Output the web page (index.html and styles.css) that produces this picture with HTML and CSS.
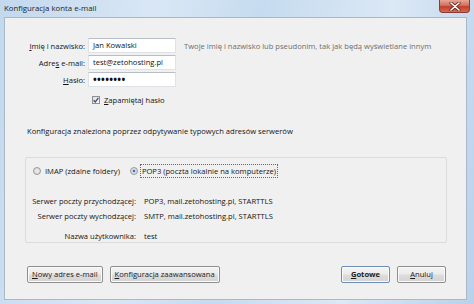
FILE: index.html
```html
<!DOCTYPE html>
<html lang="pl">
<head>
    <meta charset="UTF-8">
    <title>Konfiguracja konta e-mail</title>
    <link rel="stylesheet" href="styles.css">
</head>
<body>
<div class="window">
    <div class="titlebar">
        <span class="title">Konfiguracja konta e-mail</span>
        <div class="close">
            <svg width="12" height="9" viewBox="0 0 12 9">
                <path d="M2 1 L10 8 M10 1 L2 8" stroke="#6b2a22" stroke-width="3.2" stroke-linecap="round"/>
                <path d="M2 1 L10 8 M10 1 L2 8" stroke="#ffffff" stroke-width="1.6" stroke-linecap="round"/>
            </svg>
        </div>
    </div>
    <div class="client">
        <div class="identity">
            <label class="label"><u>I</u>mię i nazwisko:</label>
            <div class="field">Jan Kowalski</div>
            <span class="hint">Twoje imię i nazwisko lub pseudonim, tak jak będą wyświetlane innym</span>

            <label class="label">Adre<u>s</u> e-mail:</label>
            <div class="field">test@zetohosting.pl</div>
            <span></span>

            <label class="label"><u>H</u>asło:</label>
            <div class="field password">••••••••</div>
            <span></span>

            <span></span>
            <div class="remember">
                <span class="checkbox">
                    <svg width="6" height="6" viewBox="0 0 6 6">
                        <path d="M0.6 3.2 L2.3 5 L5.4 0.8" fill="none" stroke="#3d4f8a" stroke-width="1.3"/>
                    </svg>
                </span>
                <span><u>Z</u>apamiętaj hasło</span>
            </div>
            <span></span>
        </div>

        <p class="found">Konfiguracja znaleziona poprzez odpytywanie typowych adresów serwerów</p>

        <div class="panel">
            <div class="protocols">
                <span class="radio"></span>
                <span class="protocol">IMAP (zdalne foldery)</span>
                <span class="radio checked"></span>
                <span class="protocol focused">POP3 (poczta lokalnie na komputerze)</span>
            </div>
            <div class="servers">
                <span class="server-label">Serwer poczty przychodzącej:</span>
                <span>POP3, mail.zetohosting.pl, STARTTLS</span>
                <span class="server-label">Serwer poczty wychodzącej:</span>
                <span>SMTP, mail.zetohosting.pl, STARTTLS</span>
                <span class="server-label user">Nazwa użytkownika:</span>
                <span class="user">test</span>
            </div>
        </div>

        <div class="actions">
            <button class="button"><u>N</u>owy adres e-mail</button>
            <button class="button"><u>K</u>onfiguracja zaawansowana</button>
            <span class="spacer"></span>
            <button class="button default narrow"><u>G</u>otowe</button>
            <button class="button narrow"><u>A</u>nuluj</button>
        </div>
    </div>
</div>
</body>
</html>
```

FILE: styles.css
```css
body, html {
    margin: 0;
    padding: 0;
    width: 474px;
    height: 304px;
    overflow: hidden;
    font-family: 'Open Sans', 'Noto Sans', sans-serif;
    font-size: 7.6px;
    color: #141414;
}
.window {
    width: 474px;
    height: 304px;
    display: flex;
    flex-direction: column;
    background: linear-gradient(100deg, #c3d8ee 0%, #d9e7f5 30%, #c6dbef 50%, #dbe8f5 75%, #b9d1ea 100%);
}
.titlebar {
    height: 17px;
    display: flex;
    align-items: flex-start;
    position: relative;
}
.title {
    margin: 3px 0 0 4px;
    font-size: 7.8px;
    color: #1e1e1e;
}
.close {
    position: absolute;
    right: 4px;
    top: 0;
    width: 31px;
    height: 13px;
    box-sizing: border-box;
    border: 1px solid #8c3a32;
    border-top: none;
    border-radius: 0 0 4px 4px;
    background: linear-gradient(#e8a595 0%, #d3705e 45%, #c2402c 55%, #d56a4f 100%);
    display: flex;
    align-items: center;
    justify-content: center;
}
.client {
    flex: 1;
    margin: 0 7px 4px 4px;
    background-color: #f0f0f0;
    border: 1px solid #a9b8c9;
    display: flex;
    flex-direction: column;
}
.identity {
    display: grid;
    grid-template-columns: 80px 88px auto;
    grid-auto-rows: 15px;
    column-gap: 3px;
    row-gap: 2px;
    margin-top: 20px;
    align-items: center;
}
.label {
    text-align: right;
}
.label u, .button u, .remember u {
    text-underline-offset: 1px;
}
.field {
    height: 15px;
    box-sizing: border-box;
    background-color: #ffffff;
    border: 1px solid #dfe3e8;
    border-top-color: #b9bec6;
    padding: 0 4px;
    line-height: 13px;
    color: #111;
}
.password {
    font-size: 10px;
    font-weight: bold;
    letter-spacing: 0.3px;
}
.hint {
    margin-left: 5px;
    color: #6e6e6e;
    white-space: nowrap;
}
.remember {
    display: flex;
    align-items: center;
    gap: 4px;
    padding-left: 4px;
    margin-top: 6px;
}
.checkbox {
    width: 8px;
    height: 8px;
    box-sizing: border-box;
    border: 1px solid #8e8f8f;
    background: linear-gradient(135deg, #dcdcdc, #ffffff);
    display: flex;
    align-items: center;
    justify-content: center;
}
.found {
    margin: 22px 0 0 22px;
}
.panel {
    margin: 21px 19px 0 20px;
    height: 86px;
    border: 1px solid #dadde0;
    border-radius: 2px;
    box-sizing: border-box;
}
.protocols {
    display: flex;
    align-items: center;
    margin: 6px 0 0 7px;
    height: 13px;
}
.radio {
    width: 8px;
    height: 8px;
    box-sizing: border-box;
    border-radius: 50%;
    border: 1px solid #9a9a9a;
    background: radial-gradient(circle, #e8e8e8 30%, #cfcfcf 100%);
    margin-right: 4px;
}
.radio.checked {
    background: radial-gradient(circle, #2c5a9a 0, #3f7cc0 25%, #dfe6ee 40%, #d0d0d0 100%);
    margin-left: 10px;
    margin-right: 2px;
}
.protocol.focused {
    border: 1px dotted #6a6a6a;
    padding: 1px 1px;
    line-height: 10px;
}
.servers {
    display: grid;
    grid-template-columns: 110px auto;
    column-gap: 8px;
    grid-template-rows: 15px 15px 19px;
    align-items: center;
    margin-top: 16px;
}
.server-label {
    text-align: right;
}
.server-label.user, .user {
    align-self: end;
    padding-bottom: 1px;
}
.actions {
    display: flex;
    align-items: center;
    margin: 23px 20px 0 22px;
    gap: 7px;
}
.spacer {
    flex: 1;
}
.button {
    height: 17px;
    padding: 0 4px;
    font-family: inherit;
    font-size: 7.6px;
    color: #1a1a1a;
    border: 1px solid #8e8e8e;
    border-radius: 2px;
    background: linear-gradient(#f4f4f4 0%, #ebebeb 48%, #dddddd 52%, #d3d3d3 100%);
    box-shadow: inset 0 0 0 1px #fbfbfb;
    line-height: 13px;
}
.button.narrow {
    width: 49px;
}
.button.default {
    font-weight: bold;
    border-color: #6c8cb0;
}
```
